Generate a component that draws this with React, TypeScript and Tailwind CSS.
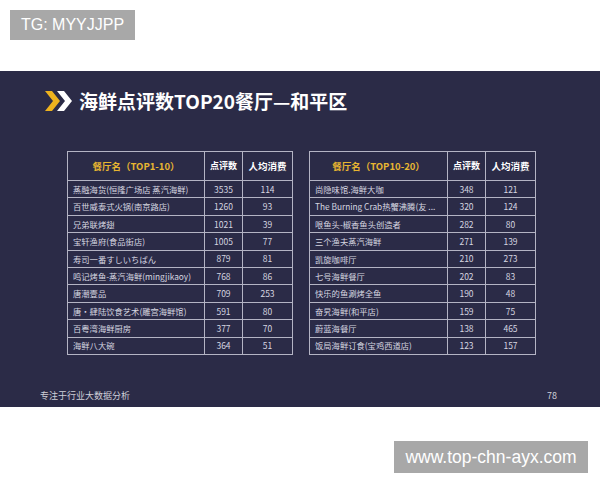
import React from "react";

const left: [string, string, string][] = [
  ["蒸融海货(恒隆广场店 蒸汽海鲜)", "3535", "114"],
  ["百世威泰式火锅(南京路店)", "1260", "93"],
  ["兄弟联烤翅", "1021", "39"],
  ["宝轩渔府(食品街店)", "1005", "77"],
  ["寿司一番すしいちばん", "879", "81"],
  ["鸣记烤鱼-蒸汽海鲜(mingjikaoy)", "768", "86"],
  ["唐潮壹品", "709", "253"],
  ["唐·肆陆饮食艺术(雕宫海鲜馆)", "591", "80"],
  ["百粤湾海鲜厨房", "377", "70"],
  ["海鲜八大碗", "364", "51"],
];

const right: [string, string, string][] = [
  ["尚隐味馆.海鲜大咖", "348", "121"],
  ["The Burning Crab热蟹沸腾(友 ...", "320", "124"],
  ["哏鱼头-椒香鱼头创造者", "282", "80"],
  ["三个渔夫蒸汽海鲜", "271", "139"],
  ["凯旋咖啡厅", "210", "273"],
  ["七号海鲜餐厅", "202", "83"],
  ["快乐的鱼涮烤全鱼", "190", "48"],
  ["奋旯海鲜(和平店)", "159", "75"],
  ["蔚蓝海餐厅", "138", "465"],
  ["饭局海鲜订食(宝鸡西道店)", "123", "157"],
];

function Table({
  title,
  rows,
  w1,
  width,
}: {
  title: string;
  rows: [string, string, string][];
  w1: string;
  width: string;
}) {
  return (
    <div className={`${width} border border-[#b4b4c4] flex flex-col`}>
      <div className="flex h-[28px]">
        <div className={`${w1} border-r border-[#b4b4c4] flex items-center justify-center text-[9.5px] font-bold text-[#e8b631]`}>
          {title}
        </div>
        <div className="w-[38px] border-r border-[#b4b4c4] flex items-center justify-center text-[9px] font-bold text-white">
          点评数
        </div>
        <div className="flex-1 flex items-center justify-center text-[9.5px] font-bold text-white">
          人均消费
        </div>
      </div>
      {rows.map((r, i) => (
        <div key={i} className="flex h-[17.4px] border-t border-[#b4b4c4]">
          <div className={`${w1} border-r border-[#b4b4c4] flex items-center pl-[5px] text-[8.3px] text-[#d6d6e0] whitespace-nowrap overflow-hidden`}>
            {r[0]}
          </div>
          <div className="w-[38px] border-r border-[#b4b4c4] flex items-center justify-center text-[8.5px] text-[#d6d6e0]">
            {r[1]}
          </div>
          <div className="flex-1 flex items-center justify-center text-[8.5px] text-[#d6d6e0]">
            {r[2]}
          </div>
        </div>
      ))}
    </div>
  );
}

export default function App() {
  return (
    <div className="w-[600px] h-[480px] bg-white flex flex-col font-['Noto_Sans_CJK_SC','Noto_Sans',sans-serif]">
      <div className="pt-[10px] pl-[10px]">
        <div className="w-[125px] h-[30px] bg-[#a8a8a8] text-white text-[16px] flex items-center justify-center font-['Liberation_Sans',sans-serif]">
          TG: MYYJJPP
        </div>
      </div>
      <div className="mt-[31px] h-[336px] bg-[#2b2b47] flex flex-col">
        <div className="pt-[13px] pl-[45px] flex items-center gap-[7px] h-[46px]">
          <svg width="27" height="20" viewBox="0 0 27 20">
            <polygon points="0,0 7,0 15,10 7,20 0,20 8,10" fill="#eeb21e" />
            <polygon points="12,0 19,0 27,10 19,20 12,20 20,10" fill="#ffffff" />
          </svg>
          <span className="text-[19px] font-bold text-white leading-none">海鲜点评数TOP20餐厅—和平区</span>
        </div>
        <div className="mt-[34px] pl-[67px] flex gap-[16px]">
          <Table title="餐厅名（TOP1-10）" rows={left} w1="w-[137px]" width="w-[226px]" />
          <Table title="餐厅名（TOP10-20）" rows={right} w1="w-[138px]" width="w-[227px]" />
        </div>
        <div className="mt-auto mb-[5px] flex justify-between items-center pl-[40px] pr-[43px] text-[9px] text-[#cfcfd8]">
          <span>专注于行业大数据分析</span>
          <span>78</span>
        </div>
      </div>
      <div className="mt-[34px] ml-[394px] w-[194px] h-[32px] bg-[#a8a8a8] text-white text-[17.5px] flex items-center justify-center font-['Liberation_Sans',sans-serif]">
        www.top-chn-ayx.com
      </div>
    </div>
  );
}
